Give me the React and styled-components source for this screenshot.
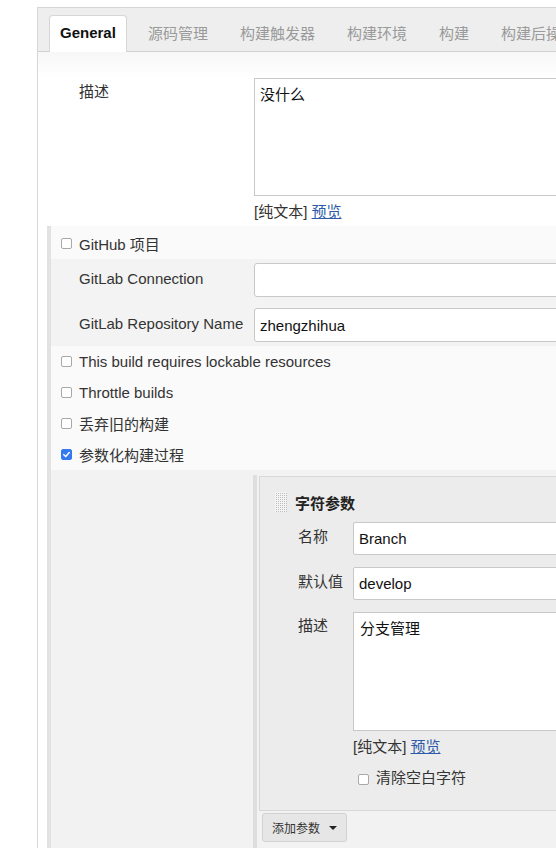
import styled, { createGlobalStyle } from "styled-components";

const GlobalStyle = createGlobalStyle`
  html, body {
    margin: 0;
    background: #fff;
    overflow: hidden;
  }
  body {
    font-family: "Liberation Sans", "Noto Sans CJK SC", sans-serif;
    font-size: 15px;
    color: #333;
  }
`;

const tabs = ["General", "源码管理", "构建触发器", "构建环境", "构建", "构建后操作"];
const options = [
  { label: "This build requires lockable resources" },
  { label: "Throttle builds" },
  { label: "丢弃旧的构建" },
  { label: "参数化构建过程", checked: true },
];

function Checkbox({ checked }) {
  return (
    <Box $checked={checked}>
      {checked && (
        <svg width="9" height="9" viewBox="0 0 10 10">
          <path d="M2 5.2 L4.2 7.3 L8 2.8" fill="none" stroke="#fff" strokeWidth="1.7" strokeLinecap="round" strokeLinejoin="round" />
        </svg>
      )}
    </Box>
  );
}

export default function App() {
  return (
    <>
      <GlobalStyle />
      <Page>
        <Frame>
          <TabBar>
            {tabs.map((t, i) => (
              <Tab key={t} $active={i === 0}>{t}</Tab>
            ))}
          </TabBar>

          <Content>
            <DescRow>
              <Label $top>描述</Label>
              <div>
                <TextArea readOnly value="没什么" />
                <Hint>[纯文本] <Link>预览</Link></Hint>
              </div>
            </DescRow>

            <Section>
              <CheckRow>
                <Checkbox />
                <span>GitHub 项目</span>
              </CheckRow>
              <SubBlock>
                <FieldRow>
                  <Label>GitLab Connection</Label>
                  <Input readOnly value="" />
                </FieldRow>
                <FieldRow>
                  <Label>GitLab Repository Name</Label>
                  <Input readOnly value="zhengzhihua" />
                </FieldRow>
              </SubBlock>
              {options.map((o) => (
                <CheckRow key={o.label}>
                  <Checkbox checked={o.checked} />
                  <span>{o.label}</span>
                </CheckRow>
              ))}

              <Nested>
                <Repeated>
                  <Chunk>
                    <ChunkTitle>
                      <Handle />
                      <strong>字符参数</strong>
                    </ChunkTitle>
                    <ChunkFields>
                      <Label>名称</Label>
                      <SmallInput readOnly value="Branch" />
                      <Label>默认值</Label>
                      <SmallInput readOnly value="develop" />
                      <Label $top>描述</Label>
                      <div>
                        <ChunkArea readOnly value="分支管理" />
                        <Hint>[纯文本] <Link>预览</Link></Hint>
                        <InlineCheck>
                          <Checkbox />
                          <span>清除空白字符</span>
                        </InlineCheck>
                      </div>
                    </ChunkFields>
                  </Chunk>
                  <AddButton>
                    添加参数
                    <Caret />
                  </AddButton>
                </Repeated>
              </Nested>
            </Section>
          </Content>
        </Frame>
      </Page>
    </>
  );
}

const Page = styled.div`
  padding: 7px 0 0 37px;
`;

const Frame = styled.div`
  width: 760px;
  border-left: 1px solid #d6d6d6;
  border-top: 1px solid #d6d6d6;
  background: #fff;
`;

const TabBar = styled.div`
  display: flex;
  align-items: flex-end;
  height: 43px;
  padding-left: 11px;
  background: #eeeeee;
  border-bottom: 1px solid #d0d0d0;
`;

const Tab = styled.div`
  height: 37px;
  box-sizing: border-box;
  display: flex;
  align-items: center;
  padding: 0 ${(p) => (p.$active ? "10px" : "15px")} 3px;
  margin: 0 ${(p) => (p.$active ? "5px" : "0")} -1px 0;
  color: ${(p) => (p.$active ? "#111" : "#9a9a9a")};
  font-weight: ${(p) => (p.$active ? "bold" : "normal")};
  background: ${(p) => (p.$active ? "#fff" : "transparent")};
  border: 1px solid ${(p) => (p.$active ? "#d6d6d6" : "transparent")};
  border-bottom: none;
  border-radius: 4px 4px 0 0;
  white-space: nowrap;
`;

const Content = styled.div`
  padding-top: 26px;
  background: linear-gradient(#f7f7f7, #fff 26px);
`;

const DescRow = styled.div`
  display: grid;
  grid-template-columns: 175px 1fr;
  padding-left: 41px;
  margin-bottom: 4px;
`;

const Label = styled.div`
  line-height: 20px;
  color: #333;
  padding-top: ${(p) => (p.$top ? "4px" : "0")};
  margin-top: ${(p) => (p.$top ? "0" : "-3px")};
  align-self: ${(p) => (p.$top ? "start" : "center")};
  white-space: nowrap;
`;

const TextArea = styled.textarea`
  display: block;
  width: 480px;
  height: 118px;
  box-sizing: border-box;
  border: 1px solid #c8c8c8;
  padding: 6px 5px;
  font: inherit;
  line-height: 20px;
  color: #111;
  resize: none;
  outline: none;
`;

const Hint = styled.div`
  margin-top: 6px;
  line-height: 20px;
  color: #333;
`;

const Link = styled.a`
  color: #2d5aa8;
  text-decoration: underline;
`;

const Section = styled.div`
  margin-left: 9px;
  padding-top: 2px;
  border-left: 4px solid #e2e2e2;
  background: #fafafa;
`;

const CheckRow = styled.div`
  display: flex;
  align-items: center;
  gap: 7px;
  height: 31px;
  padding-left: 10px;
`;

const Box = styled.span`
  width: 11px;
  height: 11px;
  box-sizing: border-box;
  flex: none;
  display: inline-flex;
  align-items: center;
  justify-content: center;
  border-radius: 2px;
  border: 1px solid ${(p) => (p.$checked ? "#3479f0" : "#a8a8a8")};
  background: ${(p) => (p.$checked ? "#3479f0" : "#fff")};
`;

const SubBlock = styled.div`
  display: grid;
  row-gap: 11px;
  padding: 4px 0;
  background: #f3f3f3;
`;

const FieldRow = styled.div`
  display: grid;
  grid-template-columns: 175px 1fr;
  align-items: center;
  padding-left: 28px;
`;

const Input = styled.input`
  width: 480px;
  height: 34px;
  box-sizing: border-box;
  border: 1px solid #c8c8c8;
  border-radius: 3px;
  padding: 0 5px;
  font: inherit;
  color: #111;
  background: #fff;
  outline: none;
`;

const Nested = styled.div`
  background: #f2f2f2;
  padding: 5px 0 0 202px;
`;

const Repeated = styled.div`
  border-left: 4px solid #dedede;
  padding: 1px 0 60px 2px;
`;

const Chunk = styled.div`
  border: 1px solid #d8d8d8;
  background: #ececec;
  padding: 13px 0 20px 15px;
`;

const ChunkTitle = styled.div`
  display: flex;
  align-items: center;
  gap: 8px;
  height: 24px;
  color: #222;
`;

const Handle = styled.span`
  width: 12px;
  height: 20px;
  background-color: #bdbdbd;
  background-image:
    linear-gradient(90deg, #f4f4f4 1px, transparent 1px),
    linear-gradient(#f4f4f4 1px, transparent 1px);
  background-size: 2px 2px;
`;

const ChunkFields = styled.div`
  display: grid;
  grid-template-columns: 55px 1fr;
  row-gap: 12px;
  margin: 8px 0 0 23px;
`;

const SmallInput = styled(Input)`
  height: 33px;
  border-radius: 2px;
`;

const ChunkArea = styled(TextArea)`
  height: 119px;
  padding: 6px 6px;
`;

const InlineCheck = styled.div`
  display: flex;
  align-items: center;
  gap: 7px;
  height: 22px;
  margin-top: 11px;
  padding-left: 5px;

  & > span:last-child {
    margin-top: -6px;
  }
`;

const AddButton = styled.div`
  display: inline-flex;
  align-items: center;
  gap: 9px;
  margin: 2px 0 0 3px;
  height: 29px;
  box-sizing: border-box;
  padding: 0 9px;
  font-size: 12px;
  color: #333;
  background: #e6e6e6;
  border: 1px solid #d2d2d2;
  border-radius: 3px;
`;

const Caret = styled.span`
  width: 0;
  height: 0;
  border-left: 4px solid transparent;
  border-right: 4px solid transparent;
  border-top: 4px solid #222;
`;
